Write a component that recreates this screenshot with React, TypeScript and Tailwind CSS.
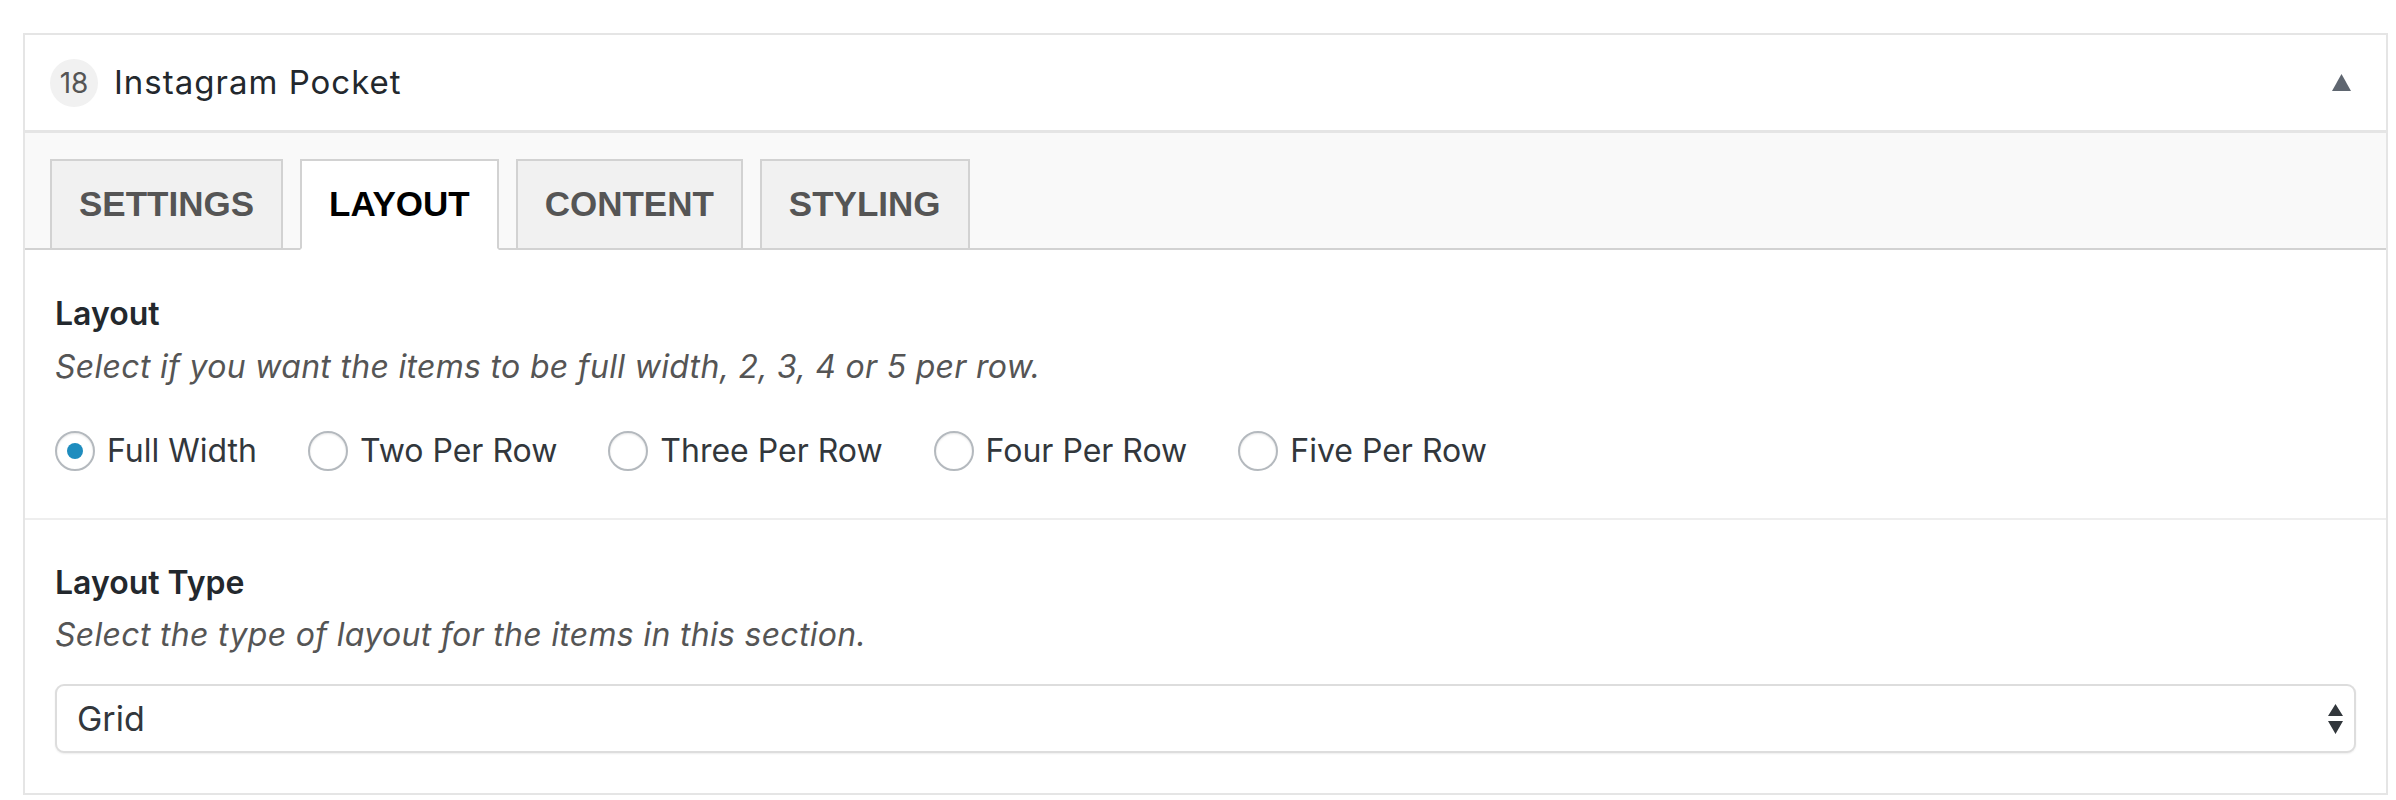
import { clsx } from "clsx";

const tabs = ["SETTINGS", "LAYOUT", "CONTENT", "STYLING"];
const layouts = ["Full Width", "Two Per Row", "Three Per Row", "Four Per Row", "Five Per Row"];

function Radio({ label, checked }: { label: string; checked?: boolean }) {
  return (
    <label className="flex items-center gap-[12px]">
      <span className="flex h-[40px] w-[40px] items-center justify-center rounded-full border-2 border-[#b4b9be] bg-white shadow-[inset_0_1px_2px_rgba(0,0,0,0.1)]">
        {checked && <span className="h-[16px] w-[16px] rounded-full bg-[#1e8cbe]" />}
      </span>
      <span className="text-[32px] leading-[40px] text-[#32373c]">{label}</span>
    </label>
  );
}

export default function App() {
  return (
    <div className="min-h-[800px] bg-white pl-[23px] pr-[8px] pt-[33px] font-['Inter',sans-serif]">
      <div className="border-2 border-[#e5e5e5] bg-white">
        <header className="flex h-[98px] items-center border-b-[3px] border-[#e5e5e5] pl-[25px] pr-[35px]">
          <span className="flex h-12 w-12 items-center justify-center rounded-full bg-[#f1f1f1] text-[28px] text-[#555]">
            18
          </span>
          <span className="ml-4 text-[33px] tracking-[1px] text-[#23282d]">Instagram Pocket</span>
          <svg className="ml-auto" width="19" height="17" viewBox="0 0 19 17">
            <path d="M9.5 0L19 17H0Z" fill="#5f6670" />
          </svg>
        </header>

        <nav className="flex items-end gap-[17px] border-b-2 border-[#d2d2d2] bg-[#f9f9f9] px-[25px] pt-[26px]">
          {tabs.map((tab) => (
            <div
              key={tab}
              className={clsx(
                "-mb-[2px] flex h-[91px] items-center border-2 px-[27px] font-['Liberation_Sans',sans-serif] text-[35px] font-bold",
                tab === "LAYOUT"
                  ? "border-[#d2d2d2] border-b-white bg-white text-black"
                  : "border-[#d2d2d2] bg-[#f1f1f1] text-[#555]"
              )}
            >
              {tab}
            </div>
          ))}
        </nav>

        <section className="border-b-2 border-[#eee] px-[30px] pb-[47px] pt-[45px]">
          <div className="text-[32px] font-semibold leading-[38px] text-[#23282d]">Layout</div>
          <p className="mt-[15px] text-[32px] italic leading-[38px] tracking-[0.3px] text-[#555]">
            Select if you want the items to be full width, 2, 3, 4 or 5 per row.
          </p>
          <div className="mt-[45px] flex items-center gap-[51px]">
            {layouts.map((l, i) => (
              <Radio key={l} label={l} checked={i === 0} />
            ))}
          </div>
        </section>

        <section className="px-[30px] pb-[40px] pt-[44px]">
          <div className="text-[32px] font-semibold leading-[38px] text-[#23282d]">Layout Type</div>
          <p className="mt-[14px] text-[32px] italic leading-[38px] tracking-[0.3px] text-[#555]">
            Select the type of layout for the items in this section.
          </p>
          <div className="mt-[30px] flex h-[69px] items-center justify-between rounded-[9px] border-2 border-[#ddd] bg-white pl-[20px] pr-[11px] shadow-[0_1px_2px_rgba(0,0,0,0.07)]">
            <span className="text-[34px] text-[#32373c]">Grid</span>
            <svg width="15" height="30" viewBox="0 0 15 30">
              <path d="M7.5 0L15 12H0Z M0 17H15L7.5 30Z" fill="#32373c" />
            </svg>
          </div>
        </section>
      </div>
    </div>
  );
}
